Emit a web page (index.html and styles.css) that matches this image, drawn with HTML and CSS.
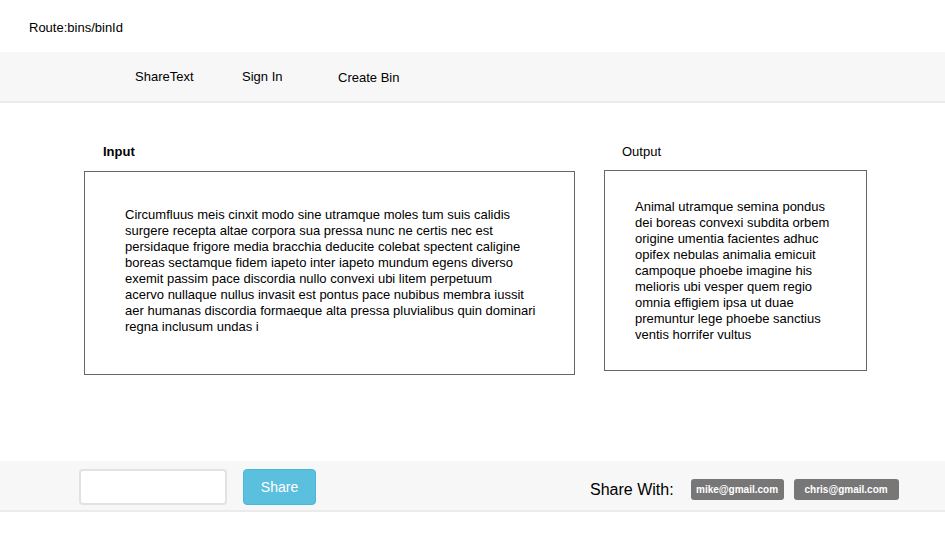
FILE: index.html
```html
<!DOCTYPE html>
<html>
<head>
<meta charset="utf-8">
<link rel="stylesheet" href="styles.css">
</head>
<body>
<div class="route">Route:bins/binId</div>
<nav class="navbar">
  <a class="nav-item brand">ShareText</a>
  <a class="nav-item signin">Sign In</a>
  <a class="nav-item create">Create Bin</a>
</nav>
<main class="main">
  <section class="col input-col">
    <div class="label bold">Input</div>
    <div class="box input-box">
      <p>Circumfluus meis cinxit modo sine utramque moles tum suis calidis surgere recepta altae corpora sua pressa nunc ne certis nec est persidaque frigore media bracchia deducite colebat spectent caligine boreas sectamque fidem iapeto inter iapeto mundum egens diverso exemit passim pace discordia nullo convexi ubi litem perpetuum<br>acervo nullaque nullus invasit est pontus pace nubibus membra iussit aer humanas discordia formaeque alta pressa pluvialibus quin dominari regna inclusum undas i</p>
    </div>
  </section>
  <section class="col output-col">
    <div class="label">Output</div>
    <div class="box output-box">
      <p>Animal utramque semina pondus dei boreas convexi subdita orbem origine umentia facientes adhuc opifex nebulas animalia emicuit campoque phoebe imagine his melioris ubi vesper quem regio omnia effigiem ipsa ut duae premuntur lege phoebe sanctius ventis horrifer vultus</p>
    </div>
  </section>
</main>
<footer class="footer">
  <input class="email-input" type="text">
  <button class="share-btn">Share</button>
  <div class="share-with">Share With:</div>
  <span class="tag tag-mike">mike@gmail.com</span>
  <span class="tag tag-chris">chris@gmail.com</span>
</footer>
</body>
</html>
```
FILE: styles.css
```css
* { box-sizing: border-box; }
html, body { margin: 0; padding: 0; background: #fff; }
body {
  font-family: "Liberation Sans", Arial, sans-serif;
  color: #000;
  font-size: 13px;
}
.route {
  height: 52px;
  padding-left: 29px;
  padding-top: 20px;
  line-height: 16px;
  font-size: 13px;
}
.navbar {
  height: 51px;
  background: #f7f7f7;
  border-bottom: 2px solid #ebebeb;
  display: flex;
  align-items: center;
  padding-left: 135px;
}
.nav-item {
  font-size: 13px;
  line-height: 16px;
  color: #000;
  text-decoration: none;
}
.brand { width: 107px; }
.signin { width: 96px; }
.create { margin-top: 2px; }
.main {
  height: 358px;
  display: flex;
  padding-left: 84px;
}
.col { display: flex; flex-direction: column; }
.label {
  font-size: 13px;
  line-height: 16px;
  height: 16px;
}
.bold { font-weight: bold; }
.input-col { width: 491px; padding-top: 41px; }
.input-col .label { padding-left: 19px; margin-bottom: 11px; }
.output-col { width: 263px; margin-left: 29px; padding-top: 41px; }
.output-col .label { padding-left: 18px; margin-bottom: 10px; }
.box {
  border: 1px solid #666;
  background: #fff;
}
.box p {
  margin: 0;
  font-size: 13px;
  line-height: 16px;
}
.input-box {
  height: 204px;
  padding: 35px 30px 0 40px;
}
.output-box {
  height: 201px;
  padding: 28px 26px 0 30px;
}
.footer {
  height: 51px;
  background: #f7f7f7;
  border-bottom: 2px solid #ebebeb;
  display: flex;
  align-items: center;
  padding-left: 79px;
}
.email-input {
  width: 148px;
  height: 36px;
  border: 2px solid #e2e2e2;
  border-radius: 4px;
  background: #fff;
  margin: 0;
  margin-top: 2px;
  padding: 0 8px;
  font-family: inherit;
}
.share-btn {
  width: 73px;
  height: 36px;
  margin-left: 16px;
  margin-top: 3px;
  background: #5bc0de;
  border: 1px solid #46b8da;
  border-radius: 4px;
  color: #fff;
  font-family: inherit;
  font-size: 14px;
  padding: 0;
}
.share-with {
  margin-left: 274px;
  font-size: 16px;
  line-height: 18px;
  margin-top: 8px;
}
.tag {
  display: inline-block;
  background: #777;
  color: #fff;
  font-weight: bold;
  font-size: 10px;
  line-height: 21px;
  height: 21px;
  border-radius: 3px;
  margin-top: 7px;
  text-align: center;
}
.tag-mike { margin-left: 17px; width: 93px; }
.tag-chris { margin-left: 10px; width: 105px; }
```
